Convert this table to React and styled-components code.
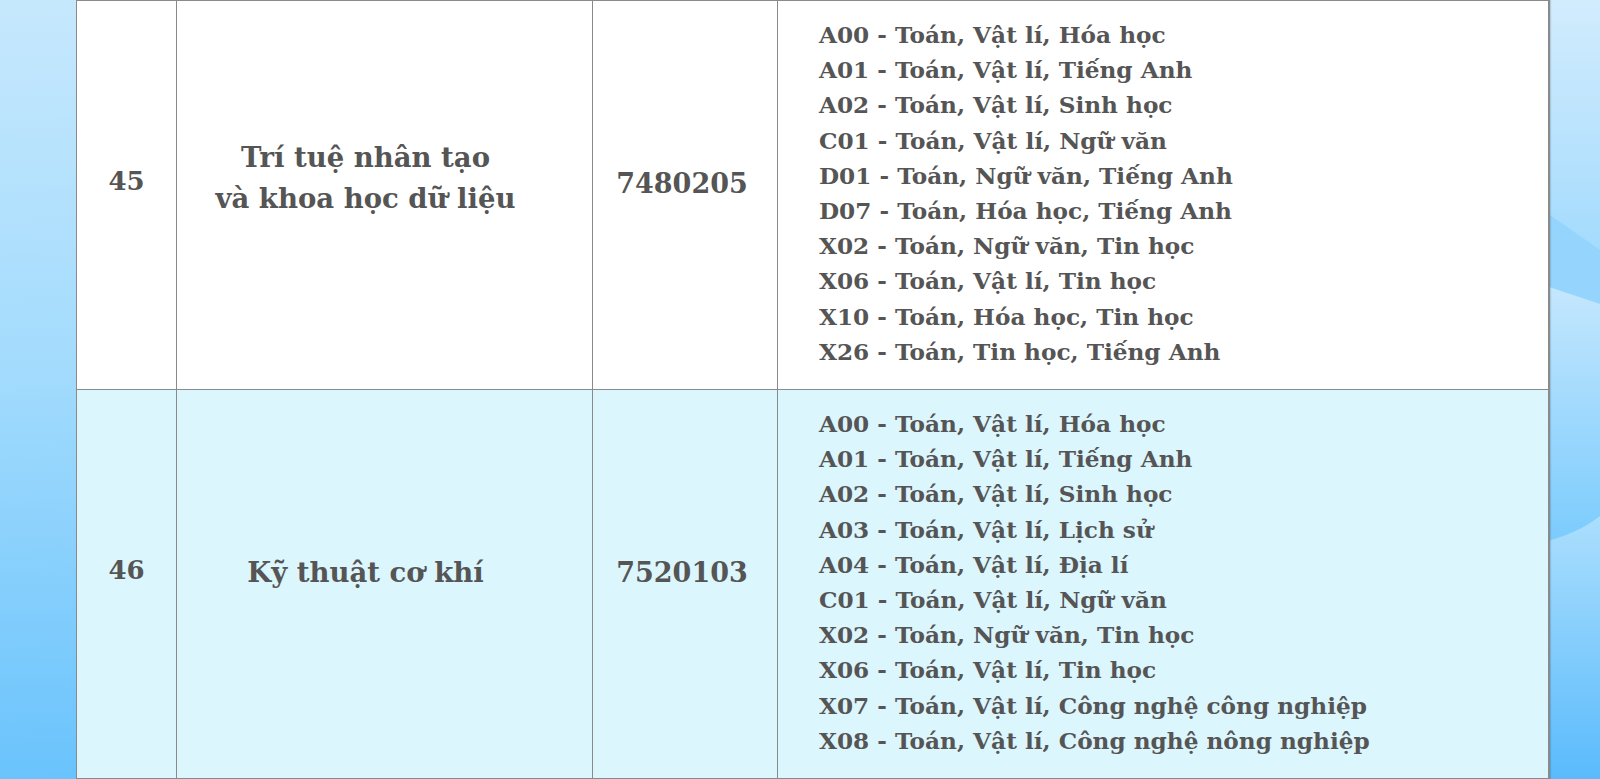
import React from "react"
import styled, { createGlobalStyle } from "styled-components"

const GlobalStyle = createGlobalStyle`
  html, body {
    margin: 0;
    padding: 0;
  }
  body {
    background: #8fd4fd;
    font-family: "DejaVu Serif", "Liberation Serif", serif;
  }
`

const Page = styled.div`
  position: relative;
  width: 1600px;
  height: 779px;
  overflow: hidden;
  display: flex;
  padding-left: 76px;
  box-sizing: border-box;
  background: linear-gradient(178deg, #c6e8fd 0%, #a2dbfd 45%, #62c0fc 100%);
`

const Backdrop = styled.svg`
  position: absolute;
  inset: 0;
  width: 100%;
  height: 100%;
  pointer-events: none;
`

const Table = styled.table`
  position: relative;
  width: 1474px;
  border-collapse: collapse;
  table-layout: fixed;
  color: #555;
  font-weight: 700;
  border-right: 2px solid #8a8a8a;
  box-shadow: 1px 0 1px rgba(0, 0, 0, 0.12);
`

const Row = styled.tr`
  height: 389px;
  background: ${({ $tint }) => ($tint ? "#dcf6fe" : "#ffffff")};
`

const Cell = styled.td`
  border: 1px solid #8a8a8a;
  text-align: center;
  vertical-align: middle;
  padding: 0 ${({ $pr }) => $pr || 0}px ${({ $pb }) => $pb ?? 24}px 0;
  font-size: ${({ $size }) => $size || 26}px;
  line-height: 41px;
  white-space: nowrap;
`

const ListCell = styled.td`
  border: 1px solid #8a8a8a;
  padding: 0 0 4px 41px;
  vertical-align: middle;
`

const Combo = styled.div`
  font-size: 23.2px;
  line-height: 35.2px;
  white-space: nowrap;
`

const rows = [
  {
    no: "45",
    name: ["Trí tuệ nhân tạo", "và khoa học dữ liệu"],
    code: "7480205",
    combos: [
      "A00 - Toán, Vật lí, Hóa học",
      "A01 - Toán, Vật lí, Tiếng Anh",
      "A02 - Toán, Vật lí, Sinh học",
      "C01 - Toán, Vật lí, Ngữ văn",
      "D01 - Toán, Ngữ văn, Tiếng Anh",
      "D07 - Toán, Hóa học, Tiếng Anh",
      "X02 - Toán, Ngữ văn, Tin học",
      "X06 - Toán, Vật lí, Tin học",
      "X10 - Toán, Hóa học, Tin học",
      "X26 - Toán, Tin học, Tiếng Anh",
    ],
  },
  {
    no: "46",
    name: ["Kỹ thuật cơ khí"],
    code: "7520103",
    tint: true,
    combos: [
      "A00 - Toán, Vật lí, Hóa học",
      "A01 - Toán, Vật lí, Tiếng Anh",
      "A02 - Toán, Vật lí, Sinh học",
      "A03 - Toán, Vật lí, Lịch sử",
      "A04 - Toán, Vật lí, Địa lí",
      "C01 - Toán, Vật lí, Ngữ văn",
      "X02 - Toán, Ngữ văn, Tin học",
      "X06 - Toán, Vật lí, Tin học",
      "X07 - Toán, Vật lí, Công nghệ công nghiệp",
      "X08 - Toán, Vật lí, Công nghệ nông nghiệp",
    ],
  },
]

export default function App() {
  return (
    <>
      <GlobalStyle />
      <Page>
        <Backdrop viewBox="0 0 1600 779" preserveAspectRatio="none">
          <defs>
            <linearGradient id="top" gradientUnits="userSpaceOnUse" x1="0" y1="0" x2="0" y2="250">
              <stop offset="0" stopColor="#d2ecfd" />
              <stop offset="1" stopColor="#a4dbfd" />
            </linearGradient>
            <linearGradient id="mid" gradientUnits="userSpaceOnUse" x1="0" y1="286" x2="0" y2="545">
              <stop offset="0" stopColor="#c4e7fd" />
              <stop offset="1" stopColor="#7acbfd" />
            </linearGradient>
            <linearGradient id="low" gradientUnits="userSpaceOnUse" x1="0" y1="520" x2="0" y2="779">
              <stop offset="0" stopColor="#aadefd" />
              <stop offset="1" stopColor="#5abbfc" />
            </linearGradient>
          </defs>
          <path d="M1540 0 L1600 0 L1600 250 L1540 208 Z" fill="url(#top)" />
          <path d="M1540 208 L1600 250 L1600 304 L1540 284 Z" fill="#94d4fd" />
          <path d="M1540 284 L1600 304 L1600 516 C1585 528 1565 537 1540 543 Z" fill="url(#mid)" />
          <path d="M1540 543 C1565 537 1585 528 1600 516 L1600 779 L1540 779 Z" fill="url(#low)" />
        </Backdrop>
        <Table>
          <colgroup>
            <col style={{ width: 100 }} />
            <col style={{ width: 416 }} />
            <col style={{ width: 185 }} />
            <col />
          </colgroup>
          <tbody>
            {rows.map((r) => (
              <Row key={r.no} $tint={r.tint}>
                <Cell $pb={28}>{r.no}</Cell>
                <Cell $size={27.5} $pr={38} $pb={r.name.length > 1 ? 34 : 24}>
                  {r.name.map((l) => (
                    <div key={l}>{l}</div>
                  ))}
                </Cell>
                <Cell $size={27} $pr={6}>{r.code}</Cell>
                <ListCell>
                  {r.combos.map((c) => (
                    <Combo key={c}>{c}</Combo>
                  ))}
                </ListCell>
              </Row>
            ))}
          </tbody>
        </Table>
      </Page>
    </>
  )
}
